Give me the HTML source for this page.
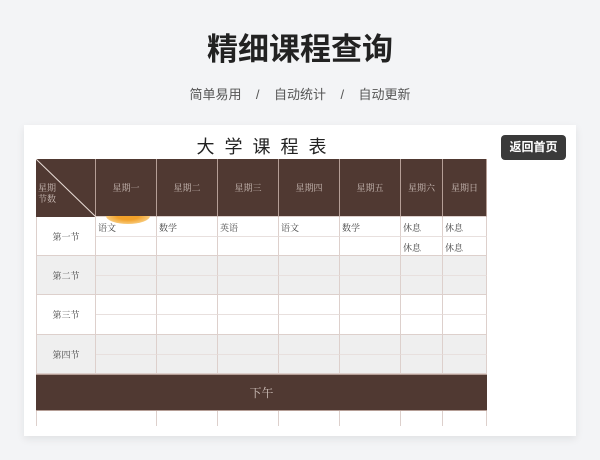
<!DOCTYPE html>
<html><head><meta charset="utf-8"><style>
*{margin:0;padding:0;box-sizing:border-box}
body{width:600px;height:460px;background:#f3f4f6;font-family:"Liberation Sans","Noto Sans CJK SC",sans-serif;position:relative;overflow:hidden}
.a{position:absolute}
h1{position:absolute;left:0;width:600px;top:24px;text-align:center;font-size:31px;font-weight:bold;color:#222}
.sub{position:absolute;left:0;width:600px;top:84px;text-align:center;font-size:13px;color:#555}
.card{left:24px;top:125px;width:552px;height:311px;background:#fff;box-shadow:0 3px 8px rgba(0,0,0,0.08)}
.ttl{left:36px;width:451px;top:133px;text-align:center;font-family:"Liberation Sans","Noto Sans CJK SC",sans-serif;font-size:18px;color:#222;letter-spacing:10px;padding-left:10px}
.btn{left:501px;top:135px;width:65px;height:25px;background:#3a3a3a;color:#fff;border-radius:4px;font-size:12px;font-weight:bold;text-align:center;line-height:25px}
.c{position:absolute;border-right:1px solid #ddd0cc;border-bottom:1px solid #ddd0cc;font-family:"Noto Serif CJK SC",serif;font-size:9px;color:#444}
.h{background:#503932;color:#cdbfb9;border-right:1px solid #b59e96;display:flex;align-items:center;justify-content:center}
.t{padding:4px 0 0 2px}
.s0{border-bottom-color:#e8e0de}
.lab{display:flex;align-items:center;justify-content:center;border-left:1px solid #ddd0cc}
</style></head><body>
<h1>精细课程查询</h1>
<div class="sub">简单易用 &nbsp;&nbsp;&nbsp;/&nbsp;&nbsp;&nbsp; 自动统计 &nbsp;&nbsp;&nbsp;/&nbsp;&nbsp;&nbsp; 自动更新</div>
<div class="a card"></div>
<div class="a ttl">大学课程表</div>
<div class="a btn">返回首页</div>
<div id="g"></div>
<div class="a" style="left:106px;top:216px;width:44px;height:8px;border-radius:0 0 22px 22px/0 0 8px 8px;background:radial-gradient(ellipse at 50% 0%,#f2a12a 35%,#f8cf85 75%,rgba(255,255,255,0) 100%)"></div>
<div class="a" style="left:36px;top:159px;width:60px;height:58px;background:#503932;border-right:1px solid #b59e96"><svg width="60" height="58" style="position:absolute;left:0;top:0"><line x1="0" y1="0" x2="60" y2="58" stroke="#e8dcd6" stroke-width="1"/></svg><div class="a" style="left:2px;top:23px;font-family:'Noto Serif CJK SC',serif;font-size:9px;color:#cdbfb9;line-height:11px">星期<br>节数</div></div>
<div class="a" style="left:36px;top:374px;width:451px;height:37px;background:#503932;border-top:1px solid #b59e96;border-bottom:1px solid #b59e96;color:#cdbfb9;font-size:12px;text-align:center;line-height:36px;font-family:'Noto Serif CJK SC',serif">下午</div>
<script>
var xs=[36,96,157,218,279,340,401,443,487];
var hd=["星期一","星期二","星期三","星期四","星期五","星期六","星期日"];
var h="";
for(var i=0;i<7;i++){h+='<div class="c h" style="left:'+xs[i+1]+'px;top:159px;width:'+(xs[i+2]-xs[i+1])+'px;height:58px">'+hd[i]+'</div>';}
var rows=[217,256,295,335,374];var labs=["第一节","第二节","第三节","第四节"];
var txt={"0_0":"语文","0_1":"数学","0_2":"英语","0_3":"语文","0_4":"数学","0_5":"休息","0_6":"休息","1_5":"休息","1_6":"休息"};
for(var r=0;r<4;r++){var bg=r%2?"#efefef":"#fff";var y=rows[r],hh=rows[r+1]-y,m=Math.round(hh/2);
h+='<div class="c lab" style="left:36px;top:'+y+'px;width:60px;height:'+hh+'px;background:'+bg+'">'+labs[r]+'</div>';
for(var i=0;i<7;i++){for(var s=0;s<2;s++){var k=r==0?(s+"_"+i):"x";var t=txt[k]||"";
h+='<div class="c t'+(s?'':' s0')+'" style="left:'+xs[i+1]+'px;top:'+(y+s*m)+'px;width:'+(xs[i+2]-xs[i+1])+'px;height:'+(s?hh-m:m)+'px;background:'+bg+'">'+t+'</div>';}}}
for(var i=0;i<8;i++){h+='<div class="a" style="left:'+(xs[i]+(i?xs[i+1]-xs[i]-1:0))+'px;top:411px;width:1px;height:15px;background:#ddd0cc"></div>';}
document.getElementById("g").innerHTML=h;
</script>
</body></html>
